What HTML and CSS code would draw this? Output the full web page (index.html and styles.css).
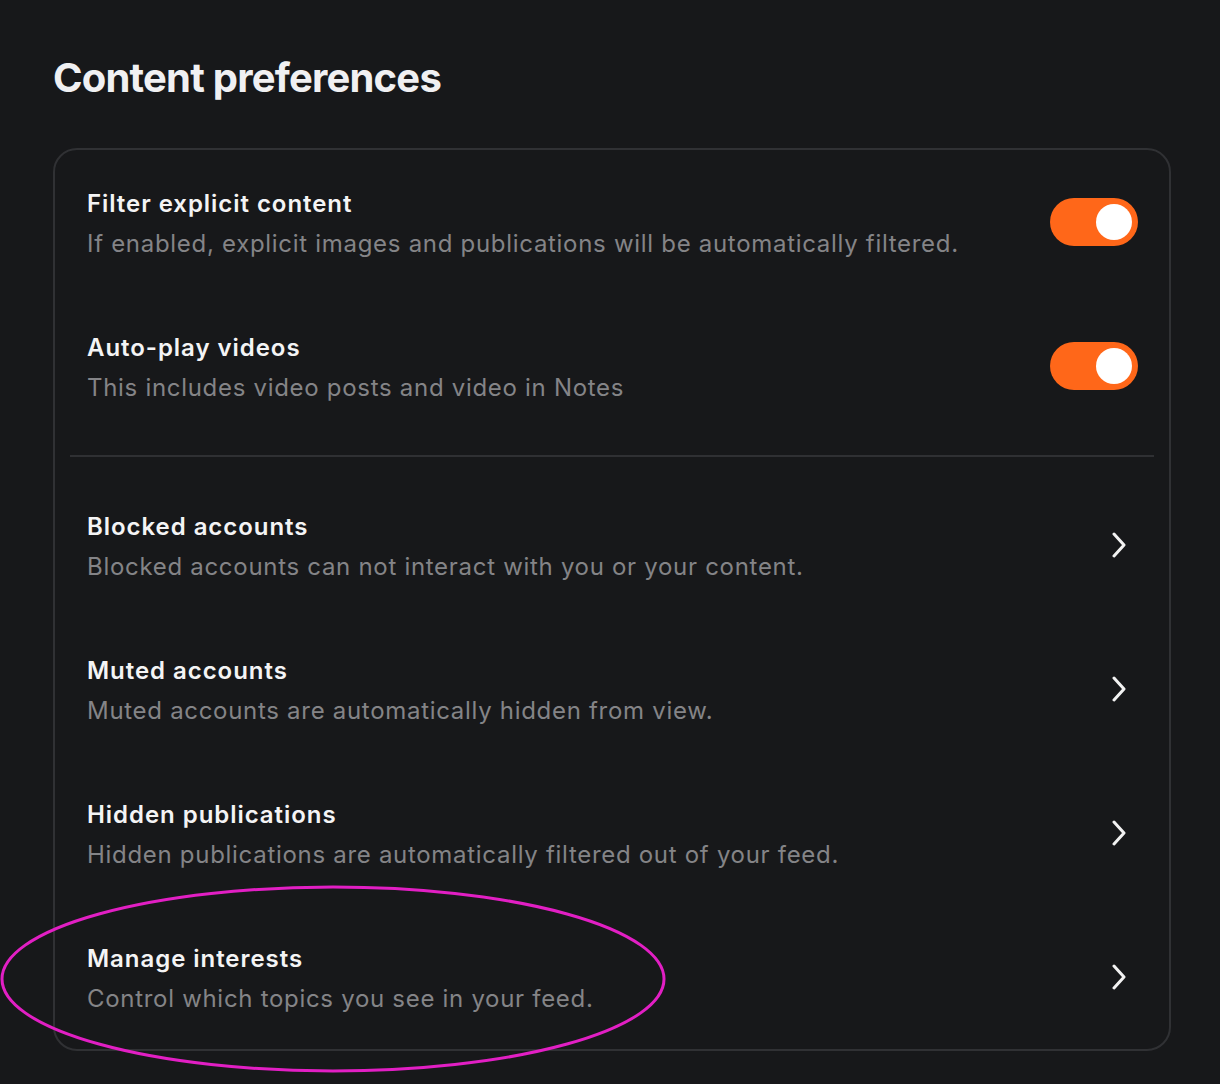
FILE: index.html
```html
<!DOCTYPE html>
<html>
<head>
<meta charset="utf-8">
<link rel="stylesheet" href="styles.css">
</head>
<body>
<div class="page">
  <h1 class="title">Content preferences</h1>
  <div class="card">
    <div class="row">
      <div class="text">
        <div class="label">Filter explicit content</div>
        <div class="desc">If enabled, explicit images and publications will be automatically filtered.</div>
      </div>
      <div class="toggle"><div class="knob"></div></div>
    </div>
    <div class="row">
      <div class="text">
        <div class="label">Auto-play videos</div>
        <div class="desc">This includes video posts and video in Notes</div>
      </div>
      <div class="toggle"><div class="knob"></div></div>
    </div>
    <div class="divider"></div>
    <div class="row">
      <div class="text">
        <div class="label">Blocked accounts</div>
        <div class="desc">Blocked accounts can not interact with you or your content.</div>
      </div>
      <svg class="chev" width="16" height="26" viewBox="0 0 16 26"><path d="M3 2 L13 13 L3 24" fill="none" stroke="#f2f2f2" stroke-width="3" stroke-linecap="round" stroke-linejoin="round"/></svg>
    </div>
    <div class="row">
      <div class="text">
        <div class="label">Muted accounts</div>
        <div class="desc">Muted accounts are automatically hidden from view.</div>
      </div>
      <svg class="chev" width="16" height="26" viewBox="0 0 16 26"><path d="M3 2 L13 13 L3 24" fill="none" stroke="#f2f2f2" stroke-width="3" stroke-linecap="round" stroke-linejoin="round"/></svg>
    </div>
    <div class="row">
      <div class="text">
        <div class="label">Hidden publications</div>
        <div class="desc">Hidden publications are automatically filtered out of your feed.</div>
      </div>
      <svg class="chev" width="16" height="26" viewBox="0 0 16 26"><path d="M3 2 L13 13 L3 24" fill="none" stroke="#f2f2f2" stroke-width="3" stroke-linecap="round" stroke-linejoin="round"/></svg>
    </div>
    <div class="row">
      <div class="text">
        <div class="label">Manage interests</div>
        <div class="desc">Control which topics you see in your feed.</div>
      </div>
      <svg class="chev" width="16" height="26" viewBox="0 0 16 26"><path d="M3 2 L13 13 L3 24" fill="none" stroke="#f2f2f2" stroke-width="3" stroke-linecap="round" stroke-linejoin="round"/></svg>
    </div>
  </div>
</div>
<svg class="annotation" width="1220" height="1084" viewBox="0 0 1220 1084"><ellipse cx="333" cy="979" rx="331" ry="92" fill="none" stroke="#e21fc4" stroke-width="3"/></svg>
</body>
</html>
```
FILE: styles.css
```css
html, body {
  margin: 0;
  padding: 0;
  background: #17181a;
}
body {
  width: 1220px;
  height: 1084px;
  overflow: hidden;
  position: relative;
  font-family: Inter, "Noto Sans", sans-serif;
  color: #f2f2f2;
}
.page {
  padding: 56px 49px 0 53px;
}
.title {
  margin: 0 0 48px 0;
  font-size: 40px;
  line-height: 44px;
  font-weight: 700;
  color: #f0f0f2;
  letter-spacing: -0.8px;
}
.card {
  border: 2px solid #303134;
  border-radius: 24px;
  display: flex;
  flex-direction: column;
}
.row {
  height: 144px;
  box-sizing: border-box;
  padding: 3px 31px 0 32px;
  display: flex;
  align-items: center;
  justify-content: space-between;
}
.text {
  display: flex;
  flex-direction: column;
  gap: 4px;
}
.label {
  font-size: 24px;
  line-height: 36px;
  font-weight: 600;
  color: #f4f4f5;
  letter-spacing: 0.95px;
}
.desc {
  font-size: 24px;
  line-height: 36px;
  font-weight: 400;
  color: #848487;
  letter-spacing: 0.7px;
}
.divider {
  height: 2px;
  background: #2f3033;
  margin: 17px 15px 16px 15px;
}
.toggle {
  width: 88px;
  height: 48px;
  border-radius: 24px;
  background: #ff6719;
  display: flex;
  align-items: center;
  justify-content: flex-end;
  padding-right: 6px;
  box-sizing: border-box;
  margin-bottom: 4px;
}
.knob {
  width: 36px;
  height: 36px;
  border-radius: 50%;
  background: #ffffff;
}
.chev {
  margin-right: 11px;
  margin-bottom: 4px;
}
.annotation {
  position: absolute;
  left: 0;
  top: 0;
  pointer-events: none;
}
```
